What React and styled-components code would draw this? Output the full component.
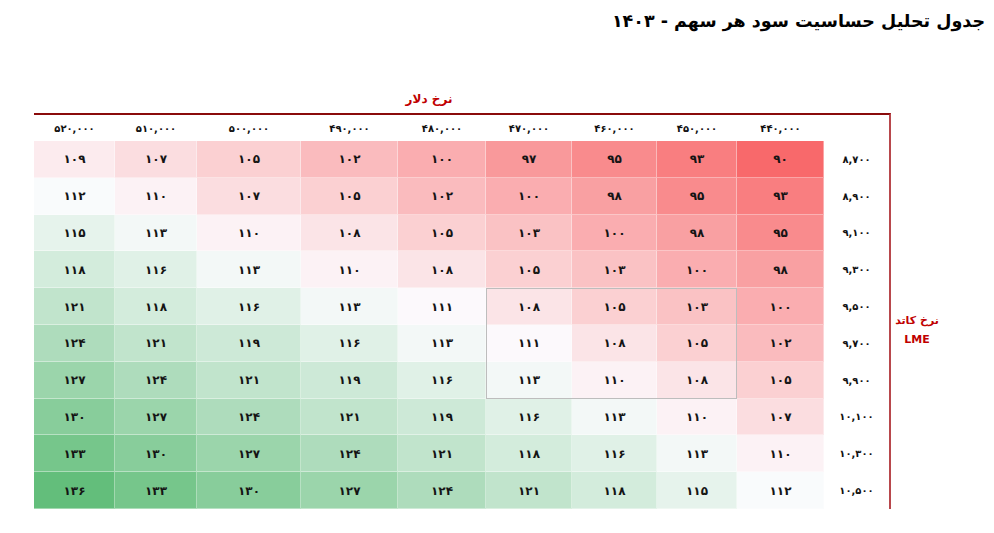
import React from "react";
import styled, { createGlobalStyle } from "styled-components";

const Global = createGlobalStyle`
  html, body { margin: 0; padding: 0; background: #ffffff; }
  body { font-family: "DejaVu Sans", "Noto Sans", sans-serif; color: #111; }
`;

const Page = styled.div`
  width: 994px;
  height: 533px;
  display: flex;
  flex-direction: column;
  overflow: hidden;
`;

const Title = styled.h1`
  margin: 0;
  padding: 11px 9px 0 0;
  height: 36px;
  box-sizing: border-box;
  direction: rtl;
  text-align: right;
  font-size: 17.5px;
  font-weight: bold;
  color: #000;
`;

const Chart = styled.div`
  display: flex;
  flex-direction: column;
  margin-left: 34px;
  margin-top: 48px;
`;

const AxisTitle = styled.div`
  width: 790px;
  height: 29px;
  display: flex;
  justify-content: center;
  align-items: center;
  direction: rtl;
  font-size: 12px;
  font-weight: bold;
  color: #c00000;
`;

const FrameRow = styled.div`
  display: flex;
  align-items: center;
`;

const Frame = styled.div`
  border-top: 2px solid #8a0b0b;
  border-right: 2px solid #b8474c;
`;

const Grid = styled.div`
  display: grid;
  grid-template-columns: 81px 82px 104px 97px 88px 86px 85px 80px 87px 65px;
  grid-template-rows: 26px repeat(10, 36.8px);
`;

const Placed = styled.div`
  grid-row: ${(p) => p.$row};
  grid-column: ${(p) => p.$col};
  display: flex;
  align-items: center;
  justify-content: center;
  font-weight: bold;
`;

const HeadCell = styled(Placed)`
  font-size: 10px;
  color: #111;
`;

const Cell = styled(Placed)`
  font-size: 12px;
  color: #141414;
  box-shadow: inset -1px -1px 0 rgba(255, 255, 255, 0.4);
`;

const RowLabel = styled(Placed)`
  font-size: 10px;
  color: #111;
`;

const Highlight = styled.div`
  grid-column: 6 / 9;
  grid-row: 6 / 9;
  border: 1.5px solid #bdbdbd;
  pointer-events: none;
  z-index: 2;
`;

const SideLabel = styled.div`
  width: 46px;
  margin-left: 3px;
  margin-top: 40px;
  display: flex;
  flex-direction: column;
  align-items: center;
  gap: 3px;
  direction: rtl;
  font-size: 11px;
  font-weight: bold;
  color: #c00000;
  line-height: 16px;
`;

const fa = (s) => String(s).replace(/[0-9]/g, (d) => "۰۱۲۳۴۵۶۷۸۹"[d]);
const fmt = (n) => fa(n.toLocaleString("en-US"));

// columns left -> right
const dollars = [520000, 510000, 500000, 490000, 480000, 470000, 460000, 450000, 440000];
const lme = [8700, 8900, 9100, 9300, 9500, 9700, 9900, 10100, 10300, 10500];
// rows, values listed right -> left (440k ... 520k)
const dataRtl = [
  [90, 93, 95, 97, 100, 102, 105, 107, 109],
  [93, 95, 98, 100, 102, 105, 107, 110, 112],
  [95, 98, 100, 103, 105, 108, 110, 113, 115],
  [98, 100, 103, 105, 108, 110, 113, 116, 118],
  [100, 103, 105, 108, 111, 113, 116, 118, 121],
  [102, 105, 108, 111, 113, 116, 119, 121, 124],
  [105, 108, 110, 113, 116, 119, 121, 124, 127],
  [107, 110, 113, 116, 119, 121, 124, 127, 130],
  [110, 113, 116, 118, 121, 124, 127, 130, 133],
  [112, 115, 118, 121, 124, 127, 130, 133, 136],
];

const MIN = 90;
const MID = 111.5;
const MAX = 136;
const RED = [248, 105, 107];
const WHITE = [252, 252, 255];
const GREEN = [99, 190, 123];
const mix = (a, b, t) => a.map((v, i) => Math.round(v + (b[i] - v) * t));
const colorFor = (v) => {
  const c = v <= MID ? mix(RED, WHITE, (v - MIN) / (MID - MIN)) : mix(WHITE, GREEN, (v - MID) / (MAX - MID));
  return `rgb(${c[0]}, ${c[1]}, ${c[2]})`;
};

export default function App() {
  return (
    <Page>
      <Global />
      <Title>جدول تحلیل حساسیت سود هر سهم - ۱۴۰۳</Title>
      <Chart>
        <AxisTitle>نرخ دلار</AxisTitle>
        <FrameRow>
          <Frame>
            <Grid>
              {dollars.map((d, c) => (
                <HeadCell key={d} $row={1} $col={c + 1}>
                  {fmt(d)}
                </HeadCell>
              ))}
              {dataRtl.map((row, r) => (
                <React.Fragment key={r}>
                  {[...row].reverse().map((v, c) => (
                    <Cell key={c} $row={r + 2} $col={c + 1} style={{ background: colorFor(v) }}>
                      {fa(v)}
                    </Cell>
                  ))}
                  <RowLabel $row={r + 2} $col={10}>
                    {fmt(lme[r])}
                  </RowLabel>
                </React.Fragment>
              ))}
              <Highlight />
            </Grid>
          </Frame>
          <SideLabel>
            <span>نرخ کاتد</span>
            <span>LME</span>
          </SideLabel>
        </FrameRow>
      </Chart>
    </Page>
  );
}
